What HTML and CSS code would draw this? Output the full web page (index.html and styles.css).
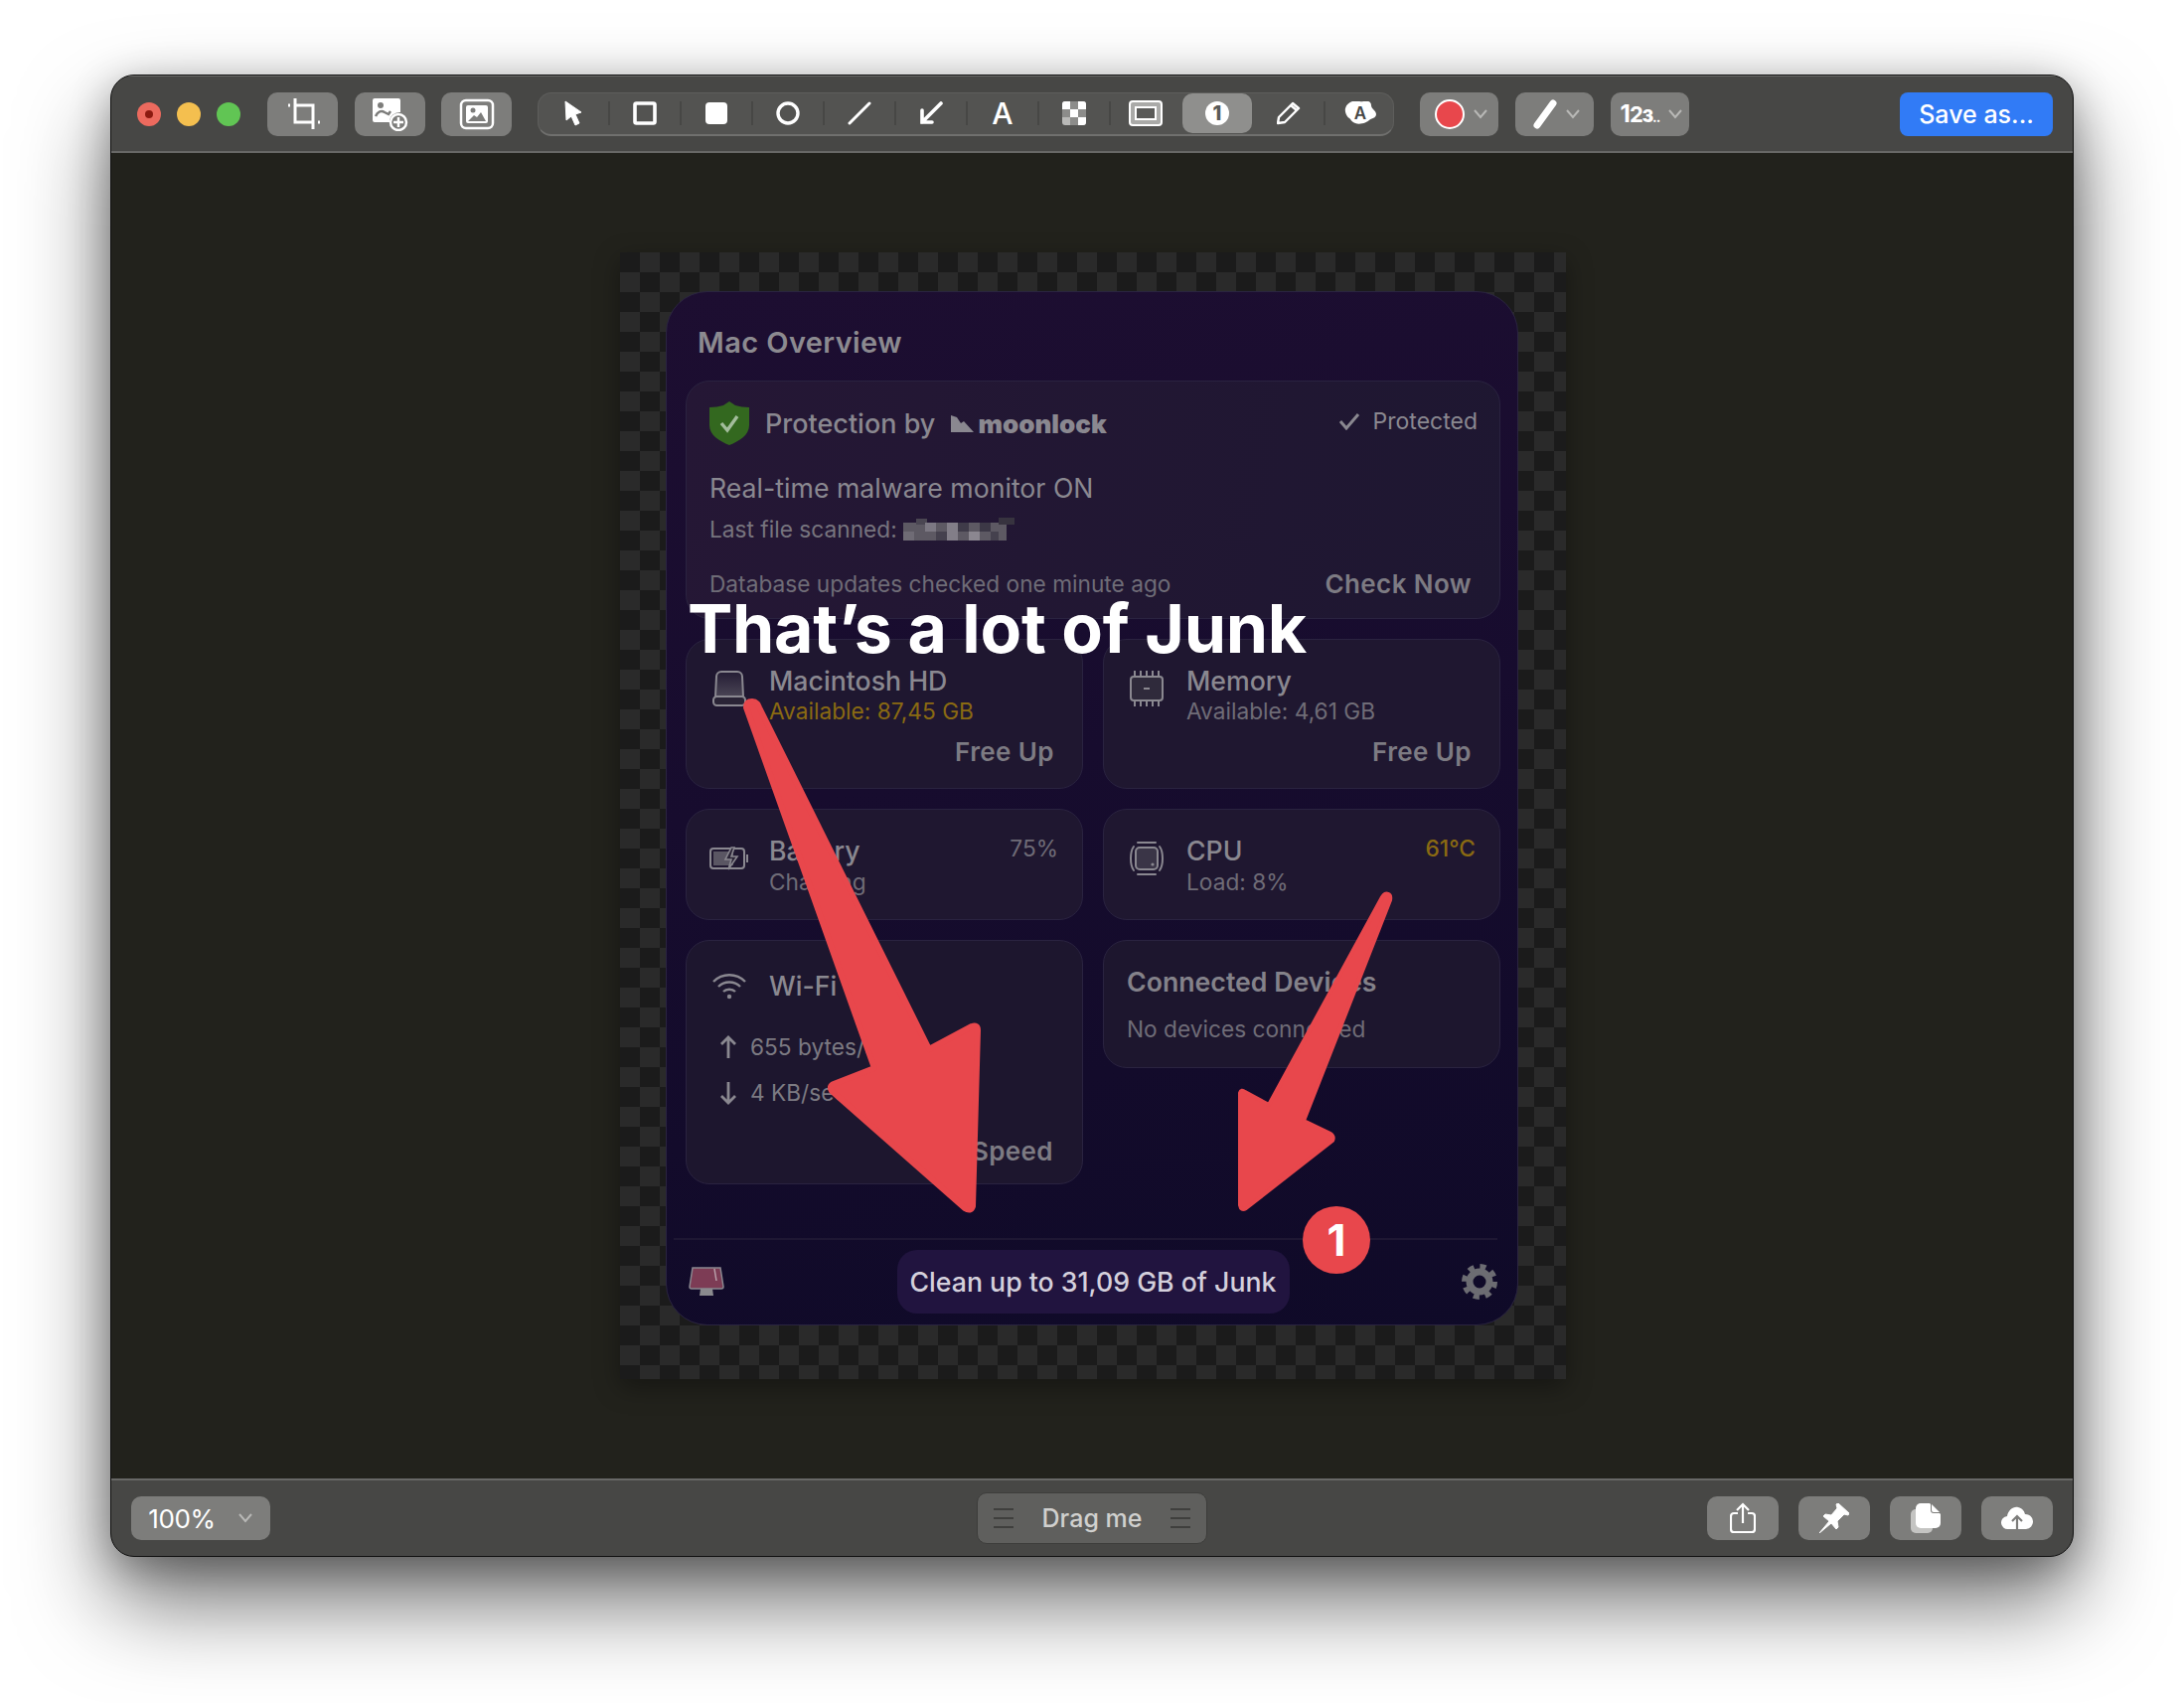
FILE: index.html
```html
<!DOCTYPE html>
<html>
<head>
    <title>Annotate</title>
    <link rel="stylesheet" href="styles.css">
</head>
<body>
<div class="window">

    <!-- Top toolbar -->
    <div class="toolbar">
        <div class="lights">
            <span class="light red"></span>
            <span class="light yellow"></span>
            <span class="light green"></span>
        </div>
        <div class="btn-row first">
            <div class="btn"><svg width="36" height="34" viewBox="0 0 36 34"><path d="M10 1v24h18M3 8h2M10 8h18v24M33 25h2" fill="none" stroke="#fff" stroke-width="3"/></svg></div>
            <div class="btn"><svg width="38" height="34" viewBox="0 0 38 34"><path d="M4 1h24a2 2 0 0 1 2 2v12a10 10 0 0 0-11 10H4a2 2 0 0 1-2-2V3a2 2 0 0 1 2-2z" fill="#fff"/><circle cx="10" cy="8" r="3" fill="#7d7d7b"/><path d="M5 19c2-5 6-6 9-4l4 2 2-3" fill="none" stroke="#7d7d7b" stroke-width="2.5"/><circle cx="28" cy="25" r="8" fill="none" stroke="#fff" stroke-width="2.5"/><path d="M28 20v10M23 25h10" stroke="#fff" stroke-width="2.5"/></svg></div>
            <div class="btn"><svg width="36" height="32" viewBox="0 0 36 32"><rect x="2" y="2" width="32" height="28" rx="5" fill="none" stroke="#fff" stroke-width="2.5"/><rect x="7" y="7" width="22" height="18" rx="2" fill="#fff"/><circle cx="14" cy="12" r="2.5" fill="#7d7d7b"/><path d="M9 23l6-6 3 2 4-5 5 9z" fill="#7d7d7b"/></svg></div>
        </div>

        <div class="tools">
            <div class="tool"><svg width="20" height="26" viewBox="0 0 20 26"><path d="M2 1l16 11-6 2 4 9-4 2-4-9-5 4z" fill="#fff" stroke="#fff" stroke-linejoin="round"/></svg></div>
            <span class="sep"></span>
            <div class="tool"><svg width="24" height="24" viewBox="0 0 24 24"><rect x="2" y="2" width="20" height="20" rx="1.5" fill="none" stroke="#fff" stroke-width="3.6"/></svg></div>
            <span class="sep"></span>
            <div class="tool"><svg width="24" height="24" viewBox="0 0 24 24"><rect x="1" y="1" width="22" height="22" rx="4" fill="#fff"/></svg></div>
            <span class="sep"></span>
            <div class="tool"><svg width="24" height="24" viewBox="0 0 24 24"><circle cx="12" cy="12" r="10" fill="none" stroke="#fff" stroke-width="3.4"/></svg></div>
            <span class="sep"></span>
            <div class="tool"><svg width="24" height="24" viewBox="0 0 24 24"><path d="M2 22L22 2" stroke="#fff" stroke-width="3" stroke-linecap="round"/></svg></div>
            <span class="sep"></span>
            <div class="tool"><svg width="24" height="24" viewBox="0 0 24 24"><path d="M3 21L22 2M3 9v12h10" fill="none" stroke="#fff" stroke-width="3.6" stroke-linecap="round"/></svg></div>
            <span class="sep"></span>
            <div class="tool tool-a">A</div>
            <span class="sep"></span>
            <div class="tool"><svg width="24" height="24" viewBox="0 0 24 24"><rect width="24" height="24" rx="3" fill="#b9b9b7"/><path d="M0 3a3 3 0 0 1 3-3h5v8H0zM16 0h5a3 3 0 0 1 3 3v5h-8zM8 8h8v8H8zM16 16h8v5a3 3 0 0 1-3 3h-5z" fill="#fff"/><path d="M8 0h8v8H8zM0 8h8v8H0zM16 8h8v8h-8zM8 16h8v8H8z" fill="#8c8c8a"/></svg></div>
            <span class="sep"></span>
            <div class="tool"><svg width="34" height="26" viewBox="0 0 34 26"><rect x="1" y="1" width="32" height="24" rx="3" fill="#aaaaa8" stroke="#fff" stroke-width="2"/><rect x="7" y="7" width="20" height="12" fill="#5a5a58" stroke="#fff" stroke-width="2"/></svg></div>
            <span class="sep sep-off"></span>
            <div class="tool tool-on"><span class="count">1</span></div>
            <span class="sep sep-off"></span>
            <div class="tool"><svg width="24" height="24" viewBox="0 0 24 24"><path d="M1 22l1-6L16 2l6 5L8 21z M14 4l6 5" fill="none" stroke="#fff" stroke-width="2.4" stroke-linejoin="round"/></svg></div>
            <span class="sep"></span>
            <div class="tool"><div class="blur-a"><svg width="32" height="24" viewBox="0 0 32 24"><path d="M8 0c4-2 7 1 11 0s8 0 8 4 5 5 5 9-5 4-7 6-9 5-14 3-4-4-6-5-5-6-4-10 4-6 7-7z" fill="#fff"/></svg><span>A</span></div></div>
        </div>

        <div class="btn-row">
            <div class="btn drop"><span class="swatch"></span><svg class="chev" width="16" height="10" viewBox="0 0 16 10"><path d="M2 1l6 7 6-7" /></svg></div>
            <div class="btn drop"><svg width="24" height="30" viewBox="0 0 24 30"><path d="M4 26L20 4" stroke="#fff" stroke-width="7" stroke-linecap="round"/></svg><svg class="chev" width="16" height="10" viewBox="0 0 16 10"><path d="M2 1l6 7 6-7" /></svg></div>
            <div class="btn drop"><span class="nums">1<i>2</i><b>3</b><u>..</u></span><svg class="chev" width="16" height="10" viewBox="0 0 16 10"><path d="M2 1l6 7 6-7" /></svg></div>
        </div>
        <div class="save">Save as...</div>
    </div>

    <!-- Canvas with the picture being edited -->
    <div class="canvas">
        <div class="shot">
            <div class="panel">
                <h1 class="panel-title">Mac Overview</h1>

                <div class="card protect">
                    <div class="row">
                        <div class="protect-head">
                            <svg width="40" height="44" viewBox="0 0 40 44"><path d="M20 0l6 4c4 1 9 2 14 2v18c0 10-10 16-20 20C10 40 0 34 0 24V6c5 0 10-1 14-2z" fill="#33681f"/><path d="M12 22l6 7 10-14" fill="none" stroke="#a3bd9c" stroke-width="3.4"/></svg>
                            <span class="protect-by">Protection by</span>
                            <span class="moonlock"><svg width="23" height="18" viewBox="0 0 23 18"><path d="M0 18V1l6 2 4 6 3-2 10 11z" fill="#8a8890"/></svg>moonlock</span>
                        </div>
                        <span class="protected"><svg width="22" height="18" viewBox="0 0 22 18"><path d="M2 9l6 7L20 2" fill="none" stroke="#8a8890" stroke-width="3"/></svg>Protected</span>
                    </div>
                    <div class="monitor">Real-time malware monitor ON</div>
                    <div class="scanned">Last file scanned:
                        <svg width="112" height="24" viewBox="0 0 112 24" shape-rendering="crispEdges">
                            <rect y="5" width="104" height="18" fill="#5d5963"/>
                            <rect x="13" y="1" width="11" height="6" fill="#4a4652"/>
                            <rect x="22" y="5" width="11" height="9" fill="#7c7883"/>
                            <rect x="44" y="5" width="11" height="18" fill="#827e88"/>
                            <rect x="66" y="14" width="11" height="9" fill="#8b8790"/>
                            <rect x="0" y="14" width="11" height="9" fill="#6f6b75"/>
                            <rect x="33" y="14" width="11" height="9" fill="#45414e"/>
                            <rect x="55" y="5" width="11" height="9" fill="#3f3b49"/>
                            <rect x="77" y="5" width="11" height="9" fill="#3c3846"/>
                            <rect x="88" y="14" width="8" height="9" fill="#45414e"/>
                            <rect x="96" y="0" width="16" height="7" fill="#37333f"/>
                        </svg>
                    </div>
                    <div class="row db-row">
                        <span class="muted">Database updates checked one minute ago</span>
                        <span class="action check-now">Check Now</span>
                    </div>
                </div>

                <div class="grid">
                    <div class="card stat tall">
                        <div class="stat-main">
                            <div class="stat-icon"><svg width="36" height="36" viewBox="0 0 36 36"><defs><linearGradient id="hdFill" x1="0" y1="0" x2="0" y2="1"><stop offset="0" stop-color="#241c34"/><stop offset="1" stop-color="#4a4555"/></linearGradient></defs><path d="M4 26L5 6a5 5 0 0 1 5-5h16a5 5 0 0 1 5 5l1 20" fill="url(#hdFill)" stroke="#8a8890" stroke-width="2"/><rect x="2" y="26" width="32" height="9" rx="3.5" fill="#2a2436" stroke="#8a8890" stroke-width="2"/></svg></div>
                            <div>
                                <div class="stat-name">Macintosh HD</div>
                                <div class="stat-sub warn">Available: 87,45 GB</div>
                            </div>
                        </div>
                        <div class="action free-up">Free Up</div>
                    </div>
                    <div class="card stat tall">
                        <div class="stat-main">
                            <div class="stat-icon"><svg width="36" height="36" viewBox="0 0 36 36"><rect x="2" y="6" width="32" height="24" rx="3" fill="#2f2a3b" stroke="#8a8890" stroke-width="2"/><path d="M6 0v6M12 0v6M18 0v6M24 0v6M30 0v6M6 30v6M12 30v6M18 30v6M24 30v6M30 30v6" stroke="#8a8890" stroke-width="2"/><path d="M15 18h6" stroke="#8a8890" stroke-width="2"/></svg></div>
                            <div>
                                <div class="stat-name">Memory</div>
                                <div class="stat-sub">Available: 4,61 GB</div>
                            </div>
                        </div>
                        <div class="action free-up">Free Up</div>
                    </div>
                    <div class="card stat short">
                        <div class="stat-main">
                            <div class="stat-icon"><svg width="40" height="24" viewBox="0 0 40 24"><rect x="1" y="2" width="34" height="20" rx="3" fill="none" stroke="#8a8890" stroke-width="2"/><rect x="4" y="5" width="20" height="14" fill="#5a5663"/><path d="M37 8h2v8h-2z" fill="#8a8890"/><path d="M22 1l-6 12h6l-3 10 9-13h-6l3-9z" fill="#2a2436" stroke="#8a8890" stroke-width="1.6"/></svg></div>
                            <div>
                                <div class="stat-name">Battery</div>
                                <div class="stat-sub">Charging</div>
                            </div>
                        </div>
                        <div class="stat-value">75%</div>
                    </div>
                    <div class="card stat short">
                        <div class="stat-main">
                            <div class="stat-icon"><svg width="36" height="36" viewBox="0 0 36 36"><rect x="7" y="7" width="22" height="22" rx="4" fill="#3a3547" stroke="#8a8890" stroke-width="2"/><path d="M9 2h18M9 34h18M5 6Q2 10 2 18T5 30M31 6Q34 10 34 18T31 30" fill="none" stroke="#8a8890" stroke-width="2" stroke-linecap="round"/><circle cx="24" cy="24" r="1.6" fill="#8a8890"/></svg></div>
                            <div>
                                <div class="stat-name">CPU</div>
                                <div class="stat-sub">Load: 8%</div>
                            </div>
                        </div>
                        <div class="stat-value warn bold">61°C</div>
                    </div>
                    <div class="card wifi">
                        <div class="stat-main">
                            <div class="stat-icon wifi-icon"><svg width="36" height="28" viewBox="0 0 36 28"><path d="M2 10c9-9 23-9 32 0M7 15c6-6 16-6 22 0M12 20c3-3 9-3 12 0" fill="none" stroke="#8a8890" stroke-width="2.4"/><circle cx="18" cy="25" r="2.2" fill="#8a8890"/></svg></div>
                            <div class="stat-name">Wi-Fi</div>
                        </div>
                        <div class="speed up"><svg width="18" height="24" viewBox="0 0 18 24"><path d="M9 23V2M2 9l7-7 7 7" fill="none" stroke="#8a8890" stroke-width="2.8"/></svg>655 bytes/s</div>
                        <div class="speed down"><svg width="18" height="24" viewBox="0 0 18 24"><path d="M9 1v21M2 15l7 7 7-7" fill="none" stroke="#8a8890" stroke-width="2.8"/></svg>4 KB/sec</div>
                        <div class="action free-up speed-test">Test Speed</div>
                    </div>
                    <div class="card devices">
                        <div class="stat-name strong">Connected Devices</div>
                        <div class="stat-sub devices-sub">No devices connected</div>
                    </div>
                </div>

                <div class="panel-foot">
                    <svg width="36" height="30" viewBox="0 0 36 30"><path d="M4 1h28l3 19a2 2 0 0 1-2 2H3a2 2 0 0 1-2-2z" fill="#7d3c55" stroke="#8a8890" stroke-width="1.5"/><path d="M26 2l2 12" stroke="#b9a0aa" stroke-width="1.5"/><path d="M12 22h12l1 7H11z" fill="#8a8a8e"/></svg>
                    <div class="clean">Clean up to 31,09 GB of Junk</div>
                    <svg width="36" height="38" viewBox="0 0 36 38"><circle cx="18" cy="19" r="10" fill="none" stroke="#6c6c72" stroke-width="7"/><circle cx="18" cy="19" r="15" fill="none" stroke="#6c6c72" stroke-width="6" stroke-dasharray="5.9 5.88"/></svg>
                </div>
            </div>

            <!-- Annotations drawn over the picture -->
            <svg class="marks" width="952" height="1134" viewBox="624 254 952 1134">
                <path d="M751 712q0-6 6-6q5 0 7 6L935 1056L978 1033Q984 1031 984 1037L979 1214Q977 1220 971 1216L837 1098Q834 1093 839 1091L880 1075z" fill="#e8474c" stroke="#e8474c" stroke-width="6" stroke-linejoin="round"/>
                <path d="M1391 903q3-5 6-3q3 1 2 6L1312 1128L1339 1141Q1343 1144 1341 1148L1254 1216Q1249 1219 1248 1213L1248 1100Q1249 1096 1253 1099L1277 1112z" fill="#e8474c" stroke="#e8474c" stroke-width="4" stroke-linejoin="round"/>
            </svg>
            <div class="headline">That’s a lot of Junk</div>
            <div class="badge">1</div>
        </div>
    </div>

    <!-- Bottom bar -->
    <div class="bottombar">
        <div class="btn zoom-level">100%<svg class="chev" width="16" height="10" viewBox="0 0 16 10"><path d="M2 1l6 7 6-7" /></svg></div>
        <div class="drag"><span class="grip"></span><span>Drag me</span><span class="grip"></span></div>
        <div class="btn-row wide">
            <div class="btn"><svg width="26" height="32" viewBox="0 0 26 32"><path d="M8 11H4a3 3 0 0 0-3 3v13a3 3 0 0 0 3 3h18a3 3 0 0 0 3-3V14a3 3 0 0 0-3-3h-4" fill="none" stroke="#fff" stroke-width="2.2"/><path d="M13 21V2M7 8l6-6 6 6" fill="none" stroke="#fff" stroke-width="2.2"/></svg></div>
            <div class="btn"><svg width="30" height="30" viewBox="0 0 30 30"><path d="M0 30l10-12-6-5 2-2 6 1 6-7-1-4 2-1 11 10-1 2-4-1-7 7 1 6-2 2-5-6z" fill="#fff" stroke="#fff" stroke-linejoin="round"/></svg></div>
            <div class="btn"><svg width="30" height="30" viewBox="0 0 30 30"><rect x="0" y="6" width="22" height="24" rx="5" fill="#c4c4c2"/><path d="M10 0h9l11 11v9a5 5 0 0 1-5 5H10a5 5 0 0 1-5-5V5a5 5 0 0 1 5-5z" fill="#fff"/><path d="M20 0l10 10h-7a3 3 0 0 1-3-3z" fill="#7d7d7b"/><path d="M21 1l8 8h-6a2 2 0 0 1-2-2z" fill="#fff"/></svg></div>
            <div class="btn"><svg width="32" height="24" viewBox="0 0 32 24"><path d="M7 23a6.500 6.500 0 0 1-1-13C7 4 12 0 17 1c4 1 6 3 7 7a7.500 7.500 0 0 1 1 15z" fill="#fff"/><path d="M16 23V11M11 15l5-5 5 5" fill="none" stroke="#7d7d7b" stroke-width="2.2"/></svg></div>
        </div>
    </div>
</div>
</body>
</html>
```

FILE: styles.css
```css
body {
    margin: 0;
    height: 1714px;
    box-sizing: border-box;
    padding: 75px 0 0 111px;
    background-color: #fff;
    font-family: Inter, "Liberation Sans", sans-serif;
}

svg {
    display: block;
    flex: none;
}

/* Window */
.window {
    width: 1976px;
    height: 1492px;
    box-sizing: border-box;
    display: flex;
    flex-direction: column;
    border: 1px solid #111;
    border-radius: 24px;
    overflow: hidden;
    background-color: #474745;
    box-shadow: 0 46px 90px rgba(0, 0, 0, 0.55), 0 10px 40px rgba(0, 0, 0, 0.3);
}

.toolbar {
    height: 78px;
    box-sizing: border-box;
    flex: none;
    display: flex;
    align-items: center;
    gap: 26px;
    padding: 0 20px 0 26px;
    border-top: 1px solid #6a6a68;
    border-bottom: 2px solid #686866;
}

.lights {
    display: flex;
    gap: 16px;
    margin-right: 1px;
}

.light {
    width: 24px;
    height: 24px;
    border-radius: 50%;
    display: flex;
    align-items: center;
    justify-content: center;
}

.light.red { background-color: #ec6a5e; }
.light.yellow { background-color: #f4bf4f; }
.light.green { background-color: #61c554; }

.light.red:before {
    content: "";
    width: 8px;
    height: 8px;
    border-radius: 50%;
    background-color: #8c1a10;
}

.btn-row {
    display: flex;
    gap: 17px;
}

.btn-row.first {
    gap: 16.5px;
}

.btn {
    width: 71px;
    height: 44px;
    display: flex;
    align-items: center;
    justify-content: center;
    border-radius: 10px;
    background-color: #7d7d7b;
}

.drop {
    width: 79px;
    gap: 8px;
    box-sizing: border-box;
    padding-left: 4px;
}

.chev {
    fill: none;
    stroke: #b8b8b6;
    stroke-width: 2;
}

.swatch {
    width: 30px;
    height: 30px;
    box-sizing: border-box;
    border-radius: 50%;
    border: 2px solid #fff;
    background-color: #e8474c;
}

.nums {
    font-size: 24px;
    font-weight: 700;
    color: #fff;
    letter-spacing: -1px;
}

.nums i { font-style: normal; font-size: 22px; }
.nums b { font-size: 17px; }
.nums u { text-decoration: none; font-size: 14px; }

.tools {
    width: 862px;
    height: 44px;
    box-sizing: border-box;
    display: flex;
    align-items: center;
    border: 1px solid #5e5e5c;
    border-bottom: 2px solid #70706e;
    border-radius: 14px;
    background-color: #535351;
}

.tool {
    width: 70px;
    height: 40px;
    flex: none;
    display: flex;
    align-items: center;
    justify-content: center;
    border-radius: 10px;
}

.tool-on {
    background-color: #8f8f8d;
}

.tool-a {
    font-size: 30px;
    font-weight: 500;
    color: #fff;
}

.sep {
    width: 2px;
    height: 24px;
    flex: none;
    background-color: #474745;
}

.sep-off {
    background-color: transparent;
}

.count {
    width: 24px;
    height: 24px;
    border-radius: 50%;
    display: flex;
    align-items: center;
    justify-content: center;
    background-color: #fff;
    color: #5a5a58;
    font-size: 20px;
    font-weight: 800;
}

.blur-a {
    position: relative;
    width: 32px;
    height: 24px;
}

.blur-a span {
    position: absolute;
    inset: 0;
    text-align: center;
    font-size: 17px;
    line-height: 24px;
    font-weight: 600;
    color: #474745;
}

.save {
    width: 154px;
    height: 44px;
    margin-left: auto;
    border-radius: 8px;
    background-color: #317bf6;
    color: #fff;
    font-size: 25px;
    font-weight: 500;
    line-height: 44px;
    text-align: center;
}

/* Canvas and picture */
.canvas {
    flex: 1;
    display: flex;
    align-items: center;
    justify-content: center;
    padding-left: 2px;
    background-color: #22221c;
}

.shot {
    position: relative;
    width: 952px;
    height: 1134px;
    box-sizing: border-box;
    padding: 39px 48px 0 46px;
    background: conic-gradient(#2a2a2a 25%, #1b1b1b 0 50%, #2a2a2a 0 75%, #1b1b1b 0) 0 0 / 40px 40px;
    box-shadow: 0 8px 24px rgba(0, 0, 0, 0.35);
}

.panel {
    height: 1041px;
    box-sizing: border-box;
    padding: 0 17px 0 19px;
    border: 1px solid #2a2440;
    border-radius: 42px;
    background: linear-gradient(170deg, #1d0e31 0%, #170c2e 45%, #0f0a28 100%);
    color: #8a8890;
}

.panel-title {
    height: 89px;
    box-sizing: border-box;
    margin: 0;
    padding: 34px 0 0 12px;
    font-size: 29px;
    line-height: 34px;
    font-weight: 600;
    letter-spacing: 0.4px;
    color: #8c8a90;
}

.card {
    box-sizing: border-box;
    border: 1px solid #2a2340;
    border-radius: 24px;
    background-color: #1f1730;
}

.protect {
    height: 240px;
    padding: 20px 22px 0 23px;
    background: linear-gradient(100deg, #251735, #1e1731);
}

.row {
    display: flex;
    align-items: center;
    justify-content: space-between;
}

.protect-head {
    display: flex;
    align-items: center;
    gap: 16px;
}

.protect-by {
    font-size: 27px;
    font-weight: 500;
}

.moonlock {
    display: flex;
    align-items: center;
    gap: 4px;
    font-size: 26px;
    font-weight: 900;
}

.protected {
    display: flex;
    align-items: center;
    gap: 13px;
    margin-top: -5px;
    font-size: 23px;
    font-weight: 400;
}

.monitor {
    margin-top: 28px;
    font-size: 26.7px;
    line-height: 30px;
}

.scanned {
    display: flex;
    align-items: center;
    gap: 6px;
    margin-top: 13px;
    font-size: 22.7px;
    line-height: 28px;
    color: #77747e;
}

.db-row {
    margin-top: 26px;
}

.muted {
    font-size: 22.7px;
    line-height: 30px;
    color: #6f6c77;
}

.action {
    font-size: 26px;
    line-height: 30px;
    font-weight: 600;
    letter-spacing: 0.4px;
    color: #7d7b83;
}

.check-now {
    margin-right: 6px;
}

.grid {
    display: grid;
    grid-template-columns: 400px 400px;
    align-items: start;
    gap: 20px;
    margin-top: 20px;
}

.stat {
    display: flex;
    padding: 26px 24px 0 23px;
    background-color: #1f1730;
}

.tall {
    height: 151px;
    flex-direction: column;
}

.short {
    height: 112px;
    justify-content: space-between;
}

.stat-main {
    display: flex;
    align-items: flex-start;
    gap: 20px;
}

.stat-icon {
    width: 40px;
    height: 46px;
    display: flex;
    align-items: center;
    justify-content: center;
}

.stat-icon.wifi-icon {
    height: 30px;
}

.stat-name {
    font-size: 26.7px;
    line-height: 30px;
    font-weight: 500;
}

.stat-name.strong {
    font-weight: 600;
    color: #84828a;
}

.stat-sub {
    margin-top: 2px;
    font-size: 22.7px;
    line-height: 28px;
    color: #6f6c77;
}

.short .stat-sub {
    margin-top: 3px;
}

.warn {
    color: #8a6a12;
}

.stat-value {
    margin-top: 1px;
    font-size: 22.7px;
    line-height: 24px;
    color: #6f6c77;
}

.stat-value.bold {
    color: #8a6a12;
    font-weight: 500;
}

.free-up {
    margin-top: 12px;
    padding-right: 4px;
    text-align: right;
}

.wifi {
    height: 246px;
    padding: 30px 29px 0 23px;
    background-color: #1d162e;
}

.speed {
    display: flex;
    align-items: center;
    gap: 13px;
    padding-left: 10px;
    font-size: 22.7px;
    line-height: 30px;
    color: #7c7a82;
}

.speed.up {
    margin-top: 32px;
}

.speed.down {
    margin-top: 16px;
}

.free-up.speed-test {
    margin-top: 29px;
    padding-right: 0;
}

.devices {
    height: 129px;
    padding: 26px 24px 0 23px;
    background-color: #1d162e;
}

.devices-sub {
    margin-top: 19px;
}

.panel-foot {
    height: 86px;
    margin: 54px 3px 0 -12px;
    box-sizing: border-box;
    display: flex;
    align-items: center;
    justify-content: space-between;
    padding: 0 0 0 15px;
    border-top: 2px solid #1e1733;
}

.clean {
    width: 395px;
    height: 64px;
    border-radius: 20px;
    background-color: #21143f;
    color: #d4d0dc;
    font-size: 26.7px;
    font-weight: 500;
    line-height: 64px;
    text-align: center;
}

.marks {
    position: absolute;
    left: 0;
    top: 0;
}

.headline {
    position: absolute;
    left: 68px;
    top: 350px;
    font-size: 68px;
    line-height: 56px;
    font-weight: 700;
    letter-spacing: -0.3px;
    color: #fff;
    white-space: nowrap;
}

.badge {
    position: absolute;
    left: 687px;
    top: 960px;
    width: 68px;
    height: 68px;
    border-radius: 50%;
    display: flex;
    align-items: center;
    justify-content: center;
    background-color: #e8474c;
    color: #fff;
    font-size: 44px;
    font-weight: 700;
}

/* Bottom bar */
.bottombar {
    height: 78px;
    box-sizing: border-box;
    flex: none;
    display: grid;
    grid-template-columns: 1fr auto 1fr;
    align-items: center;
    padding: 0 20px;
    border-top: 2px solid #686866;
}

.zoom-level {
    width: 140px;
    gap: 22px;
    color: #fff;
    font-size: 26px;
    font-weight: 400;
    letter-spacing: -0.3px;
}

.drag {
    width: 232px;
    height: 52px;
    box-sizing: border-box;
    display: flex;
    align-items: center;
    justify-content: space-between;
    padding: 0 16px;
    border: 1px solid #3d3d3b;
    border-radius: 10px;
    background-color: #5f5f5d;
    color: #d0d0ce;
    font-size: 25px;
    font-weight: 500;
}

.grip {
    width: 20px;
    height: 20px;
    box-sizing: border-box;
    border-top: 2px solid #3f3f3d;
    border-bottom: 2px solid #3f3f3d;
    background: linear-gradient(#3f3f3d, #3f3f3d) 0 center / 100% 2px no-repeat;
}

.btn-row.wide {
    gap: 20px;
    justify-content: flex-end;
}

.btn-row.wide .btn {
    width: 72px;
}
```
